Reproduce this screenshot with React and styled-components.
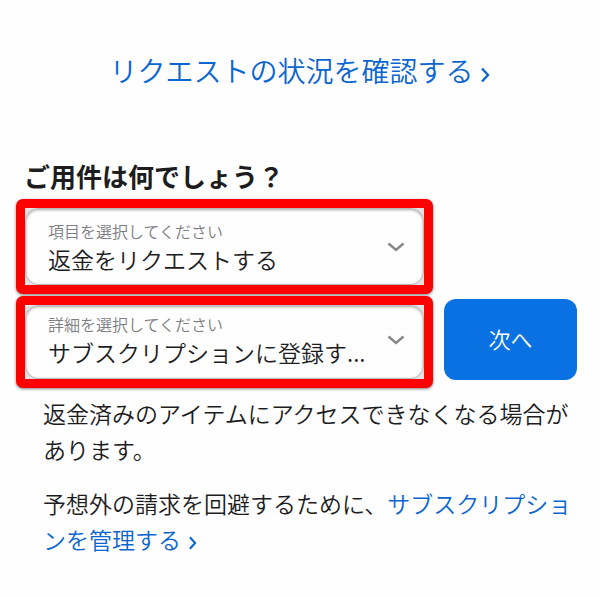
import React from "react";
import styled, { createGlobalStyle } from "styled-components";

const GlobalStyle = createGlobalStyle`
  *, *::before, *::after { box-sizing: border-box; }
  body {
    margin: 0;
    background: #fefefe;
    color: #1d1d1f;
    font-family: "Noto Sans CJK JP", sans-serif;
    font-weight: 350;
  }
`;

const Page = styled.main`
  padding: 50px 23px 36px 16px;
`;

const StatusRow = styled.div`
  display: flex;
  justify-content: center;
  padding-left: 6px;
`;

const Link = styled.a`
  color: #0b66d0;
  text-decoration: none;
  font-size: ${({ $large }) => ($large ? "28px" : "inherit")};
  line-height: ${({ $large }) => ($large ? "40px" : "inherit")};
`;

const LinkArrow = styled.svg`
  width: ${({ $large }) => ($large ? "10px" : "9px")};
  height: ${({ $large }) => ($large ? "16px" : "14px")};
  margin-left: ${({ $large }) => ($large ? "6px" : "7px")};
  vertical-align: -1px;
  fill: none;
  stroke: currentColor;
  stroke-width: 2.4;
`;

const Heading = styled.h1`
  margin: 66px 0 3px 8px;
  font-size: 26px;
  line-height: 40px;
  font-weight: 700;
`;

const Form = styled.form`
  display: grid;
  grid-template-columns: minmax(0, 1fr) 133px;
  column-gap: 11px;
  row-gap: 2px;
  align-items: start;
`;

const Highlight = styled.div`
  grid-column: 1;
  border: 9px solid #ff0000;
  border-radius: 7px;
  background: #e3e3e3;
  box-shadow: 0 1px 3px rgba(0, 0, 0, 0.5);
`;

const Field = styled.div`
  display: grid;
  align-items: center;
  height: ${({ $tall }) => ($tall ? "77px" : "74px")};
  border: 1px solid #b9b9bc;
  border-radius: 13px;
  background: #fefefe;
  box-shadow: inset 0 1px 3px rgba(0, 0, 0, 0.35);
`;

const FieldLabel = styled.label`
  grid-area: 1 / 1;
  align-self: start;
  padding: ${({ $tall }) => ($tall ? "10px" : "6px")} 22px 0;
  color: #7d7d82;
  font-size: 16px;
  line-height: 24px;
  pointer-events: none;
  z-index: 1;
`;

const Select = styled.select`
  grid-area: 1 / 1;
  width: 100%;
  height: 100%;
  padding: ${({ $tall }) => ($tall ? "24px" : "20px")} 48px 0 22px;
  border: 0;
  background: transparent;
  appearance: none;
  color: #1d1d1f;
  font: inherit;
  font-size: 23px;
  overflow: hidden;
  text-overflow: ellipsis;
`;

const Chevron = styled.svg`
  grid-area: 1 / 1;
  align-self: start;
  justify-self: end;
  width: 18px;
  height: 10px;
  margin: ${({ $tall }) => ($tall ? "33px" : "29px")} 18px 0 0;
  fill: none;
  stroke: #86868b;
  stroke-width: 2.4;
  pointer-events: none;
`;

const NextButton = styled.button`
  height: 81px;
  margin-top: 3px;
  padding: 0 8px 4px;
  border: 0;
  border-radius: 12px;
  background: #0a71e3;
  color: #fff;
  font: inherit;
  font-size: 22px;
`;

const Notes = styled.section`
  padding: 7px 0 0 27px;
  font-size: 23px;
  line-height: 36px;
`;

const Note = styled.p`
  margin: 0 0 18px;
  line-break: anywhere;
`;

function SelectField({ id, label, value, tall }) {
  return (
    <Highlight>
      <Field $tall={tall}>
        <FieldLabel htmlFor={id} $tall={tall}>{label}</FieldLabel>
        <Select id={id} $tall={tall}>
          <option>{value}</option>
        </Select>
        <Chevron $tall={tall} viewBox="0 0 18 10" aria-hidden="true">
          <path d="M1.5 1.5 L9 8 L16.5 1.5" />
        </Chevron>
      </Field>
    </Highlight>
  );
}

function Arrow({ large }) {
  return (
    <LinkArrow $large={large} viewBox="0 0 10 16" aria-hidden="true">
      <path d="M2 1.5 L8 8 L2 14.5" />
    </LinkArrow>
  );
}

export default function App() {
  return (
    <>
      <GlobalStyle />
      <Page>
        <StatusRow>
          <Link href="#status" $large>リクエストの状況を確認する<Arrow large /></Link>
        </StatusRow>
        <Heading>ご用件は何でしょう？</Heading>
        <Form>
          <SelectField id="topic" label="項目を選択してください" value="返金をリクエストする" tall />
          <SelectField id="detail" label="詳細を選択してください" value="サブスクリプションに登録す..." />
          <NextButton type="button">次へ</NextButton>
        </Form>
        <Notes>
          <Note>返金済みのアイテムにアクセスできなくなる場合があります。</Note>
          <Note>
            予想外の請求を回避するために、<Link href="#subscriptions">サブスクリプションを管理する<Arrow /></Link>
          </Note>
        </Notes>
      </Page>
    </>
  );
}
